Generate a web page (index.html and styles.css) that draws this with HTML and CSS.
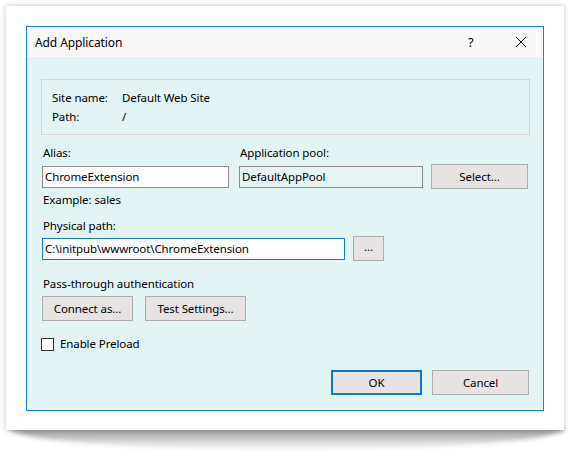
FILE: index.html
```html
<!DOCTYPE html>
<html>
<head>
<meta charset="utf-8">
<link rel="stylesheet" href="styles.css">
</head>
<body>
<div class="card">
  <div class="dialog">
    <div class="titlebar">
      <span class="title">Add Application</span>
      <span class="help">?</span>
      <svg class="close" width="12" height="12" viewBox="0 0 12 12"><path d="M1 1L11 11M11 1L1 11" stroke="#000" stroke-width="1" fill="none"/></svg>
    </div>
    <div class="content">
      <div class="info">
        <div class="info-row"><span class="info-key">Site name:</span><span>Default Web Site</span></div>
        <div class="info-row"><span class="info-key">Path:</span><span>/</span></div>
      </div>
      <div class="row-labels">
        <span class="lbl alias-lbl">Alias:</span>
        <span class="lbl">Application pool:</span>
      </div>
      <div class="row-inputs">
        <div class="input alias">ChromeExtension</div>
        <div class="input pool">DefaultAppPool</div>
        <div class="btn select">Select...</div>
      </div>
      <div class="lbl example">Example: sales</div>
      <div class="lbl phys-lbl">Physical path:</div>
      <div class="row-path">
        <div class="input path">C:\initpub\wwwroot\ChromeExtension</div>
        <div class="btn dots">...</div>
      </div>
      <div class="lbl pass-lbl">Pass-through authentication</div>
      <div class="row-auth">
        <div class="btn connect">Connect as...</div>
        <div class="btn test">Test Settings...</div>
      </div>
      <div class="check-row">
        <span class="checkbox"></span>
        <span>Enable Preload</span>
      </div>
      <div class="row-actions">
        <div class="btn ok">OK</div>
        <div class="btn cancel">Cancel</div>
      </div>
    </div>
  </div>
</div>
</body>
</html>
```
FILE: styles.css
```css
html {
  background: #ffffff;
}
body {
  margin: 0;
  padding: 0;
  font-family: "Noto Sans", "Open Sans", sans-serif;
  font-size: 11.5px;
  letter-spacing: -0.1px;
  line-height: 16px;
  color: #000;
  width: 578px;
  height: 460px;
  overflow: hidden;
}
.card {
  position: relative;
  margin: 6px 0 0 6px;
  width: 558px;
  height: 424px;
  background: #fff;
  box-shadow: 0 0 5px rgba(0,0,0,0.25);
  box-sizing: border-box;
  padding: 20px 0 0 20px;
}
.card::after {
  content: "";
  position: absolute;
  left: 3px;
  right: -1px;
  bottom: -20px;
  height: 22px;
  background: linear-gradient(to bottom, rgba(130,130,130,0.85), rgba(180,180,180,0.4) 70%, rgba(230,230,230,0));
  border-radius: 0 0 50% 50% / 0 0 100% 100%;
  filter: blur(2px);
  z-index: -1;
}
.dialog {
  width: 518px;
  height: 385px;
  box-sizing: border-box;
  border: 1px solid #1a7fdb;
  background: #e2f4f4;
  display: flex;
  flex-direction: column;
}
.titlebar {
  height: 30px;
  background: #f8f8f8;
  display: flex;
  align-items: center;
  padding-left: 8px;
  flex-shrink: 0;
}
.title {
  font-size: 12px;
  flex: 1;
  padding-top: 1px;
}
.help {
  font-size: 13px;
  width: 12px;
  margin-right: 35px;
}
.close {
  margin-right: 16px;
}
.content {
  padding: 22px 13px 0 14px;
  display: flex;
  flex-direction: column;
}
.info {
  height: 56px;
  box-sizing: border-box;
  border: 1px solid #d9d6d8;
  padding: 10px 0 0 10px;
  display: flex;
  flex-direction: column;
  gap: 3px;
}
.info-row {
  display: flex;
}
.info-key {
  width: 70px;
}
.row-labels {
  display: flex;
  margin-top: 10px;
  padding-left: 2px;
}
.alias-lbl {
  width: 197px;
}
.row-inputs {
  display: flex;
  align-items: center;
  margin-top: 3px;
  padding-left: 1px;
}
.input {
  height: 22px;
  box-sizing: border-box;
  border: 1px solid #8c8c8c;
  padding: 2px 0 0 2px;
  background: #fdfdfd;
  white-space: nowrap;
  overflow: hidden;
}
.alias {
  width: 187px;
}
.pool {
  width: 184px;
  margin-left: 10px;
  background: #e6f4f4;
}
.btn {
  box-sizing: border-box;
  border: 1px solid #adadad;
  background: #e7e3e3;
  display: flex;
  align-items: center;
  justify-content: center;
  height: 25px;
}
.select {
  width: 97px;
  margin-left: 8px;
}
.example {
  margin-top: 3px;
  padding-left: 2px;
}
.phys-lbl {
  margin-top: 10px;
  padding-left: 2px;
}
.row-path {
  display: flex;
  align-items: center;
  margin-top: 2px;
  padding-left: 1px;
}
.path {
  width: 303px;
  border-color: #1a78d6;
  background: #fff;
}
.dots {
  width: 31px;
  margin-left: 8px;
  padding-bottom: 3px;
}
.pass-lbl {
  margin-top: 15px;
  padding-left: 2px;
}
.row-auth {
  display: flex;
  margin-top: 4px;
  padding-left: 1px;
  gap: 12px;
}
.connect {
  width: 91px;
}
.test {
  width: 101px;
}
.check-row {
  display: flex;
  align-items: center;
  margin-top: 15px;
  height: 16px;
}
.checkbox {
  width: 13px;
  height: 13px;
  box-sizing: border-box;
  border: 1px solid #333;
  background: #fff;
  margin-right: 6px;
}
.row-actions {
  display: flex;
  justify-content: flex-end;
  gap: 10px;
  margin-top: 18px;
  padding-right: 1px;
}
.ok {
  width: 91px;
  border: 2px solid #0f74d4;
}
.cancel {
  width: 97px;
}
```
